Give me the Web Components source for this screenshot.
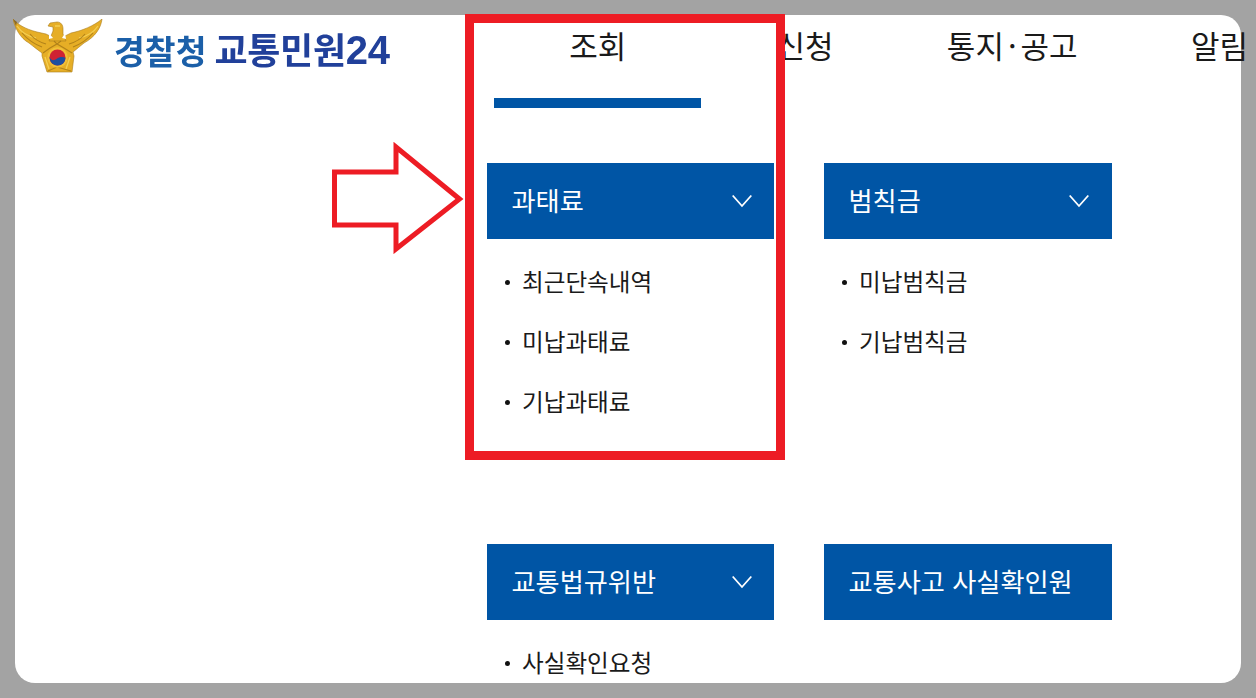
<!DOCTYPE html>
<html lang="ko">
<head>
<meta charset="utf-8">
<title>경찰청 교통민원24</title>
<style>
    html, body { margin: 0; padding: 0; }
    body { background: #a3a3a3; font-family: "Noto Sans CJK KR", "Noto Sans", sans-serif; color: #111; }
</style>
</head>
<body>
<app-panel>
    <site-header slot="header">
        <nav-tab>조회</nav-tab>
        <nav-tab>신청</nav-tab>
        <nav-tab>통지<span style="padding: 0 4px">·</span>공고</nav-tab>
        <nav-tab>알림</nav-tab>
    </site-header>
    <menu-card heading="과태료" arrow>
        <menu-item>최근단속내역</menu-item>
        <menu-item>미납과태료</menu-item>
        <menu-item>기납과태료</menu-item>
    </menu-card>
    <menu-card heading="범칙금" arrow style="--arrow-pad: 23px">
        <menu-item>미납범칙금</menu-item>
        <menu-item>기납범칙금</menu-item>
    </menu-card>
    <menu-card heading="교통법규위반" arrow>
        <menu-item>사실확인요청</menu-item>
    </menu-card>
    <menu-card heading="교통사고 사실확인원"></menu-card>
    <red-callout slot="overlay"></red-callout>
</app-panel>

<script>
class appPanel extends HTMLElement{
    constructor(){
        super();
        this.attachShadow({mode: 'open'});
        this.shadowRoot.innerHTML = `
            <style>
                :host{
                    display: block;
                    box-sizing: border-box;
                    width: 1256px;
                    height: 698px;
                    padding: 15px;
                    overflow: hidden;
                }
                .panel{
                    width: 1226px;
                    height: 668px;
                    background: #fff;
                    border-radius: 20px;
                }
                .grid{
                    display: grid;
                    grid-template-columns: 287px 288px;
                    grid-auto-rows: 381px;
                    column-gap: 50px;
                    margin: 55px 0 0 472px;
                }
            </style>
            <div class="panel">
                <slot name="header"></slot>
                <div class="grid"><slot></slot></div>
            </div>
            <slot name="overlay"></slot>
        `;
    }
}

class siteHeader extends HTMLElement{
    constructor(){
        super();
        this.attachShadow({mode: 'open'});
        this.shadowRoot.innerHTML = `
            <style>
                :host{
                    display: flex;
                    height: 93px;
                    white-space: nowrap;
                }
                .logo{
                    display: flex;
                    align-items: flex-start;
                    width: 481px;
                    flex: none;
                    margin-left: -2px;
                }
                svg{ display: block; margin-top: 4px; flex: none; filter: blur(.35px); }
                .name{
                    display: flex;
                    align-items: baseline;
                    margin: 10px 0 0 11px;
                    line-height: 46px;
                    font-weight: 700;
                    filter: blur(.45px);
                }
                .a{ color: #1b5fa8; font-size: 33.5px; }
                .b{ color: #21409a; font-size: 36px; margin-left: 8px; letter-spacing: -.3px; }
                .n{ font-family: "Liberation Sans", sans-serif; font-size: 40px; }
                nav{ display: flex; }
            </style>
            <div class="logo">
                <svg width="90" height="55" viewBox="0 0 90 55">
                    <path fill="#e6ae26" stroke="#a97c1e" stroke-width=".6" d="M0 0 C4 5 12 10 24 13 L33 15 L37 17 L52 17 L58 14 C68 12 81 7 89 0 C88 9 82 18 71 24 C67 27 64 30 60 33 L61 37 L59 53 L34 53 L29 37 L29 34 C25 31 21 28 16 24 C7 19 2 9 0 0 Z"/>
                    <path fill="#e6ae26" stroke="#a97c1e" stroke-width=".6" d="M37 4 L44 3 C48 3 50 6 50 10 L50 15 L53 22 L36 22 L40 12 L40 8 L35 7 Z"/>
                    <path fill="#fff" d="M36 14 L40 19 L36 20 Z M52 14 L49 19 L53 20 Z"/>
                    <path fill="#8a6a2a" d="M0 0 L4 3 L3 7 Z"/>
                    <path fill="none" stroke="#f7d75e" stroke-width="1.3" opacity=".8" d="M4 7 C8 13 14 17 23 19 M85 7 C81 13 75 17 66 19 M32 38 L36 50 M57 38 L53 50 M42 7 L47 7"/>
                    <path fill="none" stroke="#a87a18" stroke-width="1.1" opacity=".85" d="M9 14 C15 21 21 25 29 28 M17 15 C21 20 26 23 33 25 M80 14 C74 21 68 25 60 28 M72 15 C68 20 63 23 56 25 M30 34 L37 29 L44 25 L51 29 L59 34 M41 22 L44 25 L48 22 M35 52 L44 48 L58 52"/>
                    <circle cx="44.5" cy="38.5" r="10.2" fill="#f0c038"/>
                    <circle cx="44.5" cy="38.5" r="8" fill="#cf2233"/>
                    <path fill="#1d4f9f" d="M36.5 37.5 C37.5 41.5 41 42 43.5 40 C46.5 37.5 50.5 37.5 52.5 39 C52.2 43.5 49 46.5 44.5 46.5 C40 46.5 36.4 42.7 36.5 37.5 Z"/>
                </svg>
                <div class="name"><span class="a">경찰청</span><span class="b">교통민원<span class="n">24</span></span></div>
            </div>
            <nav><slot></slot></nav>
        `;
    }
}

class navTab extends HTMLElement{
    constructor(){
        super();
        this.attachShadow({mode: 'open'});
        this.shadowRoot.innerHTML = `
            <style>
                :host{
                    display: block;
                    box-sizing: border-box;
                    flex: none;
                    width: 207.3px;
                    height: 93px;
                    padding-top: 10px;
                    text-align: center;
                    font-size: 31px;
                    line-height: 40px;
                    color: #1a1a1a;
                }
                :host(:first-child){
                    border-bottom: 10px solid #0055a5;
                }
            </style>
            <slot></slot>
        `;
    }
}

class menuCard extends HTMLElement{
    constructor(){
        super();
        this.attachShadow({mode: 'open'});
        const arrow = this.hasAttribute('arrow') ? `
            <svg width="20" height="14" viewBox="0 0 20 14">
                <path d="M.7 1.5 L10 12 L19.3 1.5" fill="none" stroke="#fff" stroke-width="1.8"/>
            </svg>` : '';
        this.shadowRoot.innerHTML = `
            <style>
                :host{ display: block; }
                .head{
                    display: flex;
                    align-items: center;
                    justify-content: space-between;
                    box-sizing: border-box;
                    height: 76px;
                    padding: 0 var(--arrow-pad, 22px) 0 24.5px;
                    background: #0055a5;
                    color: #fff;
                    font-size: 26.2px;
                }
                span{ margin-top: -2px; }
                .list{ padding-top: 13px; }
            </style>
            <div class="head"><span>${this.getAttribute('heading')}</span>${arrow}</div>
            <div class="list"><slot></slot></div>
        `;
    }
}

class menuItem extends HTMLElement{
    constructor(){
        super();
        this.attachShadow({mode: 'open'});
        this.shadowRoot.innerHTML = `
            <style>
                :host{
                    display: flex;
                    align-items: center;
                    height: 60px;
                    padding-left: 18px;
                    font-size: 23.6px;
                    color: #1a1a1a;
                }
                i{
                    width: 5px;
                    height: 5px;
                    margin-right: 12px;
                    border-radius: 50%;
                    background: #111;
                    flex: none;
                }
                span{ margin-top: -2px; }
            </style>
            <i></i><span><slot></slot></span>
        `;
    }
}

class redCallout extends HTMLElement{
    constructor(){
        super();
        this.attachShadow({mode: 'open'});
        this.shadowRoot.innerHTML = `
            <style>
                :host{
                    position: absolute;
                    left: 0;
                    top: 0;
                    pointer-events: none;
                }
                .box{
                    position: absolute;
                    left: 465px;
                    top: 14px;
                    width: 320px;
                    height: 446px;
                    box-sizing: border-box;
                    border: 9px solid #ed1c24;
                }
                svg{
                    position: absolute;
                    left: 330px;
                    top: 142px;
                }
            </style>
            <div class="box"></div>
            <svg width="136" height="112" viewBox="0 0 136 112">
                <path d="M4.5 30 H66 V5 L129.5 57 L66 107 V83 H4.5 Z" fill="none" stroke="#ed1c24" stroke-width="5"/>
            </svg>
        `;
    }
}

customElements.define('app-panel', appPanel);
customElements.define('site-header', siteHeader);
customElements.define('nav-tab', navTab);
customElements.define('menu-card', menuCard);
customElements.define('menu-item', menuItem);
customElements.define('red-callout', redCallout);
</script>
</body>
</html>
